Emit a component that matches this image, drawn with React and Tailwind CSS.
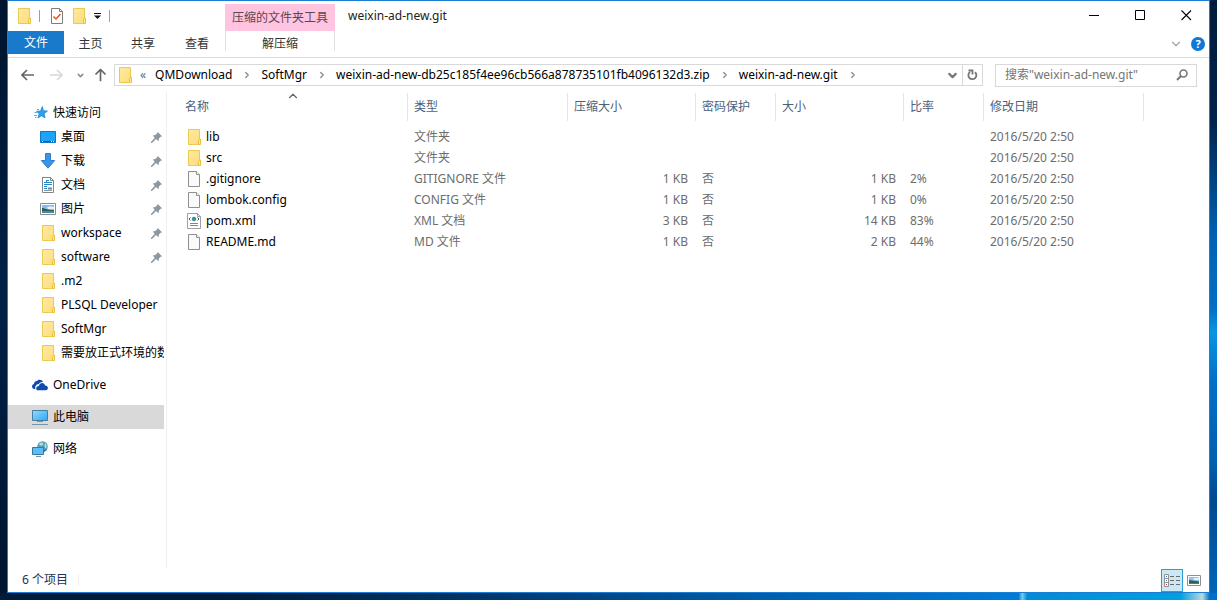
import React from "react";
import clsx from "clsx";
import { ChevronDown, ChevronRight, ChevronUp } from "lucide-react";

const FolderIcon = () => (
  <svg width="16" height="16" viewBox="0 0 16 16" className="shrink-0">
    <defs>
      <linearGradient id="folder" x1="0" y1="0" x2="1" y2="1">
        <stop offset="0" stopColor="#ffe9a2" />
        <stop offset="1" stopColor="#fddd7c" />
      </linearGradient>
    </defs>
    <path d="M2.500.5h11v15h-11z" fill="url(#folder)" stroke="#ecc94f" />
    <path d="M12.500 15.500v-4l1-1.500h1v5.500z" fill="#ffe9a2" stroke="#e9c13f" />
  </svg>
);

const FileIcon = () => (
  <svg width="16" height="16" viewBox="0 0 16 16" className="shrink-0">
    <path d="M2.5.5h8l3 3v12h-11z" fill="#fafafa" stroke="#8f8f8f" />
    <path d="M10.5.5v3h3" fill="#fff" stroke="#8f8f8f" />
  </svg>
);

const XmlIcon = () => (
  <svg width="16" height="16" viewBox="0 0 16 16" className="shrink-0">
    <path d="M1.5.5h10l3 3v12h-13z" fill="#fff" stroke="#a0a0a0" />
    <path d="M11.5.5v3h3" fill="none" stroke="#a0a0a0" />
    <path d="M4.500 4.500L3 6l1.500 1.500M11.500 4.500L13 6l-1.500 1.500" fill="none" stroke="#555" />
    <circle cx="8" cy="6" r="1.800" fill="#2aa58c" stroke="#28699b" strokeWidth=".8" />
    <path d="M4 10.500h8M4 12.500h8" stroke="#7c8798" />
  </svg>
);

const StarIcon = () => (
  <svg width="16" height="16" viewBox="0 0 16 16" className="shrink-0">
    <path d="M9.300 1.500l1.200 4.200 4 .3-3.300 2.800.8 4.200-3.500-2.200L5 13l1.200-4.200L3.500 6.300l4-.3z" fill="#2ba1ec" stroke="#1683cf" strokeWidth=".7" />
    <path d="M4 4.500h2M1.500 7.500H4M1 10.500h3M2 12.500h1.500" stroke="#5aaee6" />
  </svg>
);

const DesktopIcon = () => (
  <svg width="16" height="16" viewBox="0 0 16 16" className="shrink-0">
    <path d="M.5 2.500h15v11H.500z" fill="#1ca3fb" stroke="#1277bd" />
    <path d="M1 12.500h14" stroke="#0b5f9d" />
    <path d="M2 12.500h1M11 12.500h1M13 12.500h1" stroke="#fff" />
  </svg>
);

const DownloadIcon = () => (
  <svg width="16" height="16" viewBox="0 0 16 16" className="shrink-0">
    <path d="M5.500.5h5v7h4.200L8 15.200 1.300 7.500h4.200z" fill="#3b94e8" stroke="#2b7fd0" />
  </svg>
);

const DocumentIcon = () => (
  <svg width="16" height="16" viewBox="0 0 16 16" className="shrink-0">
    <path d="M2.5.5h8l3 3v12h-11z" fill="#fff" stroke="#858585" />
    <path d="M10.5.5v3h3" fill="none" stroke="#858585" />
    <path d="M7 3.500h2M4 5.500h2M7 5.500h5M4 7.500h8M4 9.500h3M4 11.500h3" stroke="#2389cf" />
    <path d="M6.500 3v3" stroke="#2389cf" />
    <path d="M8 10.500h4v2H8z" fill="#6d8799" />
    <path d="M4 13.500h8" stroke="#8b9aa5" />
  </svg>
);

const PictureIcon = () => (
  <svg width="16" height="16" viewBox="0 0 16 16" className="shrink-0">
    <path d="M.5 2.500h15v11H.500z" fill="#fff" stroke="#8c8c8c" />
    <path d="M2 4h12v8H2z" fill="#86bdf0" />
    <path d="M7 6.500c2-1.800 5-1 7-.5v2H8z" fill="#e5f2fb" />
    <path d="M2 7c3 0 4 2 12 2v1.500H2z" fill="#2d6152" />
    <path d="M2 10.500h12V12H2z" fill="#4b7fae" />
  </svg>
);

const CloudIcon = () => (
  <svg width="16" height="16" viewBox="0 0 16 16" className="shrink-0">
    <path d="M3.400 12.300C1.300 12.300 0 11 0 9.500s1.100-2.400 2-2.500C2 4.800 3.900 3.900 5 4.100 6.200 2.200 10 2.100 11 5c-2-.3-3.500.5-4.100 1.900C4.400 6.700 2.600 9.700 3.400 12.300z" fill="#0f4bb0" />
    <path d="M6 13.300c-2.500 0-2.500-4.200.9-4.400C7.500 5.300 12.100 5 13 8.400c3.700-.1 3.800 4.900.8 4.900z" fill="#0f4bb0" />
  </svg>
);

const ComputerIcon = () => (
  <svg width="16" height="16" viewBox="0 0 16 16" className="shrink-0">
    <defs>
      <linearGradient id="screen" x1="0" y1="0" x2="1" y2="1">
        <stop offset="0" stopColor="#8fdaff" />
        <stop offset="1" stopColor="#2fa8f4" />
      </linearGradient>
    </defs>
    <path d="M.5 1.500h15v10H.500z" fill="url(#screen)" stroke="#477d9e" />
    <path d="M5 12.500h6M0 15.500h16" stroke="#7895a8" />
  </svg>
);

const NetworkIcon = () => (
  <svg width="16" height="16" viewBox="0 0 16 16" className="shrink-0">
    <circle cx="10.500" cy="5.500" r="5.300" fill="#5c9fb8" />
    <path d="M7 3c2-2 4-2 4 0S8 5 7 3zM13 2c2 2 2 4 1 5s-2-3-1-5z" fill="#b5e0e6" />
    <path d="M13 9c1-1 2-1 2 0l-3 2V9z" fill="#2f6d91" />
    <path d="M.5 6.500h11v7H.500z" fill="#5ac0fb" stroke="#3c7598" />
    <path d="M4 15.500h5" stroke="#7895a8" />
  </svg>
);

const PinIcon = () => (
  <svg width="11" height="11" viewBox="0 0 11 11" className="shrink-0">
    <path d="M6.700 0L11 4.300 9.700 4.800 7.900 6.600 7.600 9.200 5 7 1 11H0v-1l3.800-4.200L1.700 3.400l2.700-.3L6.200 1.300z" fill="#8b969e" />
  </svg>
);

const PropertiesIcon = () => (
  <svg width="12" height="16" viewBox="0 0 12 16" className="shrink-0">
    <path d="M.5.5h8l3 3v12H.500z" fill="#fff" stroke="#7d7d7d" />
    <path d="M8.500.5v3h3" fill="none" stroke="#7d7d7d" />
    <path d="M2.500 8.500L5 11l4.500-5" fill="none" stroke="#e8501c" strokeWidth="1.500" />
  </svg>
);

const ArrowIcon = ({ className }) => (
  <svg width="13" height="12" viewBox="0 0 13 12" className={className}>
    <path d="M1 6h12M6 1L1 6l5 5" fill="none" stroke="currentColor" strokeWidth="1.700" />
  </svg>
);

const quickAccess = [
  { name: "桌面", icon: DesktopIcon, pinned: true },
  { name: "下载", icon: DownloadIcon, pinned: true },
  { name: "文档", icon: DocumentIcon, pinned: true },
  { name: "图片", icon: PictureIcon, pinned: true },
  { name: "workspace", icon: FolderIcon, pinned: true },
  { name: "software", icon: FolderIcon, pinned: true },
  { name: ".m2", icon: FolderIcon },
  { name: "PLSQL Developer", icon: FolderIcon },
  { name: "SoftMgr", icon: FolderIcon },
  { name: "需要放正式环境的数", icon: FolderIcon },
];

const columns = [
  { title: "名称", width: "w-[229px]" },
  { title: "类型", width: "w-[160px]" },
  { title: "压缩大小", width: "w-[128px]" },
  { title: "密码保护", width: "w-[80px]" },
  { title: "大小", width: "w-[128px]" },
  { title: "比率", width: "w-[80px]" },
  { title: "修改日期", width: "w-[160px]" },
];

const files = [
  { name: "lib", icon: FolderIcon, type: "文件夹" },
  { name: "src", icon: FolderIcon, type: "文件夹" },
  { name: ".gitignore", icon: FileIcon, type: "GITIGNORE 文件", packed: "1 KB", locked: "否", size: "1 KB", ratio: "2%" },
  { name: "lombok.config", icon: FileIcon, type: "CONFIG 文件", packed: "1 KB", locked: "否", size: "1 KB", ratio: "0%" },
  { name: "pom.xml", icon: XmlIcon, type: "XML 文档", packed: "3 KB", locked: "否", size: "14 KB", ratio: "83%" },
  { name: "README.md", icon: FileIcon, type: "MD 文件", packed: "1 KB", locked: "否", size: "2 KB", ratio: "44%" },
];

const path = [
  "QMDownload",
  "SoftMgr",
  "weixin-ad-new-db25c185f4ee96cb566a878735101fb4096132d3.zip",
  "weixin-ad-new.git",
];

const TitleBar = () => (
  <div className="flex h-[30px] items-start">
    <div className="flex h-[30px] w-[217px] shrink-0 items-center pl-2">
      <FolderIcon />
      <span className="ml-[7px] h-3 w-px bg-gray-400" />
      <button type="button" aria-label="属性" className="ml-[11px]">
        <PropertiesIcon />
      </button>
      <button type="button" aria-label="新建文件夹" className="ml-2">
        <FolderIcon />
      </button>
      <button type="button" aria-label="自定义快速访问工具栏" className="ml-[7px]">
        <svg width="7" height="6" viewBox="0 0 7 6">
          <path d="M0 .5h7" stroke="#111" />
          <path d="M0 2.500h7L3.500 6z" fill="#111" />
        </svg>
      </button>
      <span className="ml-2 h-3 w-px bg-gray-400" />
    </div>
    <div className="mt-[3px] flex h-[27px] w-[110px] shrink-0 items-center justify-center bg-[#ffc4df] text-[#5c4450]">
      压缩的文件夹工具
    </div>
    <h1 className="flex h-[30px] flex-1 items-center pl-[13px]">weixin-ad-new.git</h1>
    <div className="flex h-[29px] text-black">
      <button type="button" aria-label="最小化" className="flex w-[46px] items-center justify-center">
        <svg width="11" height="11" viewBox="0 0 11 11">
          <path d="M0 5.500h10" stroke="currentColor" />
        </svg>
      </button>
      <button type="button" aria-label="最大化" className="flex w-[46px] items-center justify-center">
        <svg width="11" height="11" viewBox="0 0 11 11">
          <path d="M.5.5h9v9H.500z" fill="none" stroke="currentColor" />
        </svg>
      </button>
      <button type="button" aria-label="关闭" className="flex w-[46px] items-center justify-center">
        <svg width="11" height="11" viewBox="0 0 11 11">
          <path d="M.5.5l9.500 9.500M10 .5L.5 10" stroke="currentColor" strokeWidth="1.100" />
        </svg>
      </button>
    </div>
  </div>
);

const Ribbon = () => (
  <div className="flex h-[27px] items-start border-b border-[#dadbdc] text-[#333]">
    <button type="button" className="h-[23px] w-14 bg-[#1979ca] text-white">
      文件
    </button>
    <button type="button" className="h-[26px] w-[53px]">主页</button>
    <button type="button" className="h-[26px] w-[52px]">共享</button>
    <button type="button" className="h-[26px] w-14">查看</button>
    <button type="button" className="h-5 w-[110px] border-x border-[#e0e0e0] leading-[26px]">
      解压缩
    </button>
    <div className="mt-[6px] mr-1 ml-auto flex items-center gap-2">
      <button type="button" aria-label="展开功能区">
        <ChevronDown size={14} strokeWidth={2} className="text-[#a0a0a0]" />
      </button>
      <button
        type="button"
        aria-label="帮助"
        className="flex size-[14px] items-center justify-center rounded-full bg-[#0f78d4] text-[11px] leading-3 font-bold text-white"
      >
        ?
      </button>
    </div>
  </div>
);

const AddressBar = () => (
  <div className="flex h-[34px] items-center pr-3 pl-[13px]">
    <button type="button" aria-label="后退">
      <ArrowIcon className="text-[#666]" />
    </button>
    <button type="button" aria-label="前进" className="ml-4">
      <ArrowIcon className="rotate-180 text-[#d8d8d8]" />
    </button>
    <button type="button" aria-label="最近浏览的位置" className="ml-[13px]">
      <ChevronDown size={9} strokeWidth={4} className="text-[#8a8a8a]" />
    </button>
    <button type="button" aria-label="上移" className="ml-[9px]">
      <ArrowIcon className="rotate-90 text-[#666]" />
    </button>
    <nav className="ml-[7px] flex h-[22px] min-w-0 flex-1 items-center border border-[#d9d9d9] pl-[2px]">
      <FolderIcon />
      <span className="ml-[7px] text-[#666]">«</span>
      {path.map((part) => (
        <React.Fragment key={part}>
          <a href="#" className="ml-[9px] whitespace-nowrap text-black">
            {part}
          </a>
          <ChevronRight size={10} strokeWidth={3} className="ml-[10px] shrink-0 text-[#888]" />
        </React.Fragment>
      ))}
      <button type="button" aria-label="以前的位置" className="mr-[3px] ml-auto">
        <ChevronDown size={13} strokeWidth={4} className="text-[#777]" />
      </button>
      <button
        type="button"
        aria-label="刷新"
        className="flex h-5 w-5 items-center justify-center border-l border-[#d9d9d9]"
      >
        <svg width="11" height="12" viewBox="0 0 11 12">
          <path d="M8 3.200A4 4 0 1 1 3 3" fill="none" stroke="#777" strokeWidth="1.800" />
          <path d="M1.500 1.500h4v4" fill="none" stroke="#777" strokeWidth="1.800" />
        </svg>
      </button>
    </nav>
    <label className="ml-3 flex h-[23px] w-[202px] items-center border border-[#d9d9d9] pr-2 pl-[9px]">
      <input
        type="text"
        aria-label="搜索"
        placeholder={'搜索"weixin-ad-new.git"'}
        className="min-w-0 flex-1 outline-none placeholder:text-[#757575]"
      />
      <svg width="12" height="12" viewBox="0 0 12 12">
        <circle cx="7.500" cy="4.500" r="3.500" fill="none" stroke="#777" strokeWidth="1.600" />
        <path d="M5 7L1 11" stroke="#777" strokeWidth="2" />
      </svg>
    </label>
  </div>
);

const Sidebar = () => (
  <aside className="w-[159px] shrink-0 border-r border-[#f0f0f0] pt-[9px] text-black">
    <a href="#" className="flex h-6 items-center gap-1 pl-[25px]">
      <StarIcon />
      快速访问
    </a>
    <ul>
      {quickAccess.map(({ name, icon: Icon, pinned }) => (
        <li key={name}>
          <a href="#" className="mr-[2px] flex h-6 items-center pl-8">
            <Icon />
            <span className="ml-[5px] min-w-0 flex-1 overflow-hidden whitespace-nowrap">{name}</span>
            {pinned && (
              <span className="mr-[2px]">
                <PinIcon />
              </span>
            )}
          </a>
        </li>
      ))}
    </ul>
    <a href="#" className="mt-2 flex h-6 items-center gap-[5px] pl-6">
      <CloudIcon />
      OneDrive
    </a>
    <a href="#" className="mt-2 mr-[2px] flex h-6 items-center gap-[5px] bg-[#d9d9d9] pl-6">
      <ComputerIcon />
      此电脑
    </a>
    <a href="#" className="mt-2 flex h-6 items-center gap-[5px] pl-6">
      <NetworkIcon />
      网络
    </a>
  </aside>
);

const FileTable = () => (
  <div className="min-w-0 flex-1 overflow-hidden pt-px pl-3">
    <table className="table-fixed border-separate border-spacing-0 text-left text-[#6d6d6d]">
      <thead>
        <tr>
          {columns.map(({ title, width }, i) => (
            <th
              key={title}
              className={clsx(
                "relative h-7 border-r border-[#e5e5e5] p-0 pl-[6px] font-normal text-[#4c607a]",
                width
              )}
            >
              {title}
              {i === 0 && (
                <ChevronUp
                  size={14}
                  strokeWidth={2}
                  className="absolute top-[-4px] left-[107px] text-[#666]"
                />
              )}
            </th>
          ))}
        </tr>
      </thead>
      <tbody>
        <tr aria-hidden="true">
          <td className="h-[5px] p-0" />
        </tr>
        {files.map(({ name, icon: Icon, type, packed, locked, size, ratio }) => (
          <tr key={name}>
            <td className="h-[21px] p-0 pl-[7px]">
              <a href="#" className="flex items-center gap-1 text-black">
                <Icon />
                {name}
              </a>
            </td>
            <td className="p-0 pl-[6px]">{type}</td>
            <td className="p-0 pr-2 text-right">{packed}</td>
            <td className="p-0 pl-[6px]">{locked}</td>
            <td className="p-0 pr-2 text-right">{size}</td>
            <td className="p-0 pl-[6px]">{ratio}</td>
            <td className="p-0 pl-[6px]">2016/5/20 2:50</td>
          </tr>
        ))}
      </tbody>
    </table>
  </div>
);

const StatusBar = () => (
  <footer className="flex h-6 items-center pr-1 pl-[14px] text-[#26324f]">
    <span className="border-r border-[#f0f0f0] pr-[10px] leading-3">6 个项目</span>
    <button
      type="button"
      aria-label="详细信息"
      className="ml-auto flex h-[23px] w-[22px] items-center justify-center border border-[#26a0da] bg-[#cce8f6]"
    >
      <svg width="16" height="13" viewBox="0 0 16 13">
        <path d="M.5.5h4v12h-4zM.5 4.500h4M.5 8.500h4" fill="#fff" stroke="#929292" />
        <path d="M2 2.500h1M2 6.500h1" stroke="#3a6fb0" />
        <path d="M2 10.500h1" stroke="#c22" />
        <path d="M6 2.500h4M12 2.500h4M6 6.500h4M12 6.500h4M6 10.500h4M12 10.500h4" stroke="#6b6b6b" />
      </svg>
    </button>
    <button type="button" aria-label="大图标" className="flex w-[22px] justify-center">
      <svg width="14" height="11" viewBox="0 0 14 11">
        <path d="M.5.5h13v10H.500z" fill="#fff" stroke="#8f8f8f" />
        <path d="M2 2h10v7H2z" fill="#8fc2f2" />
        <path d="M6 3.500l6-1v2.500H7z" fill="#e6f3fb" />
        <path d="M2 5l10 1.500V8H2z" fill="#33604e" />
        <path d="M2 8h10v1H2z" fill="#3c78c4" />
      </svg>
    </button>
  </footer>
);

const App = () => {
  return (
    <div className="flex h-screen flex-col overflow-hidden bg-[#001c3c] font-['Noto_Sans','Noto_Sans_CJK_SC',sans-serif] text-[12px] leading-4 text-[#222]">
      <div className="flex min-h-0 flex-1">
        <div className="w-[7px] shrink-0 bg-gradient-to-b from-[#00152e] via-[#002147] to-[#00152e]" />
        <main className="flex min-w-0 flex-1 flex-col border border-[#1a7fd4] bg-white">
          <TitleBar />
          <Ribbon />
          <AddressBar />
          <div className="flex min-h-0 flex-1">
            <Sidebar />
            <FileTable />
          </div>
          <StatusBar />
        </main>
        <div className="w-[7px] shrink-0 bg-[linear-gradient(to_bottom,#001c3c_0%,#00224a_20%,#0062b4_40%,#0070c4_52%,#0a95e4_56%,#0070c8_64%,#005fb0_78%,#004a90_84%,#0064b8_100%)]" />
      </div>
      <div className="h-[7px] shrink-0 bg-[linear-gradient(to_right,#001c38_0%,#001c38_18%,#003a70_42%,#0062b0_65%,#007cd8_83.7%,#7cc8ee_84%,#008cd4_84.4%,#00a0e0_97%,#b8d8e0_98.8%,#0070c8_99.4%)]" />
    </div>
  );
};

export default App;
